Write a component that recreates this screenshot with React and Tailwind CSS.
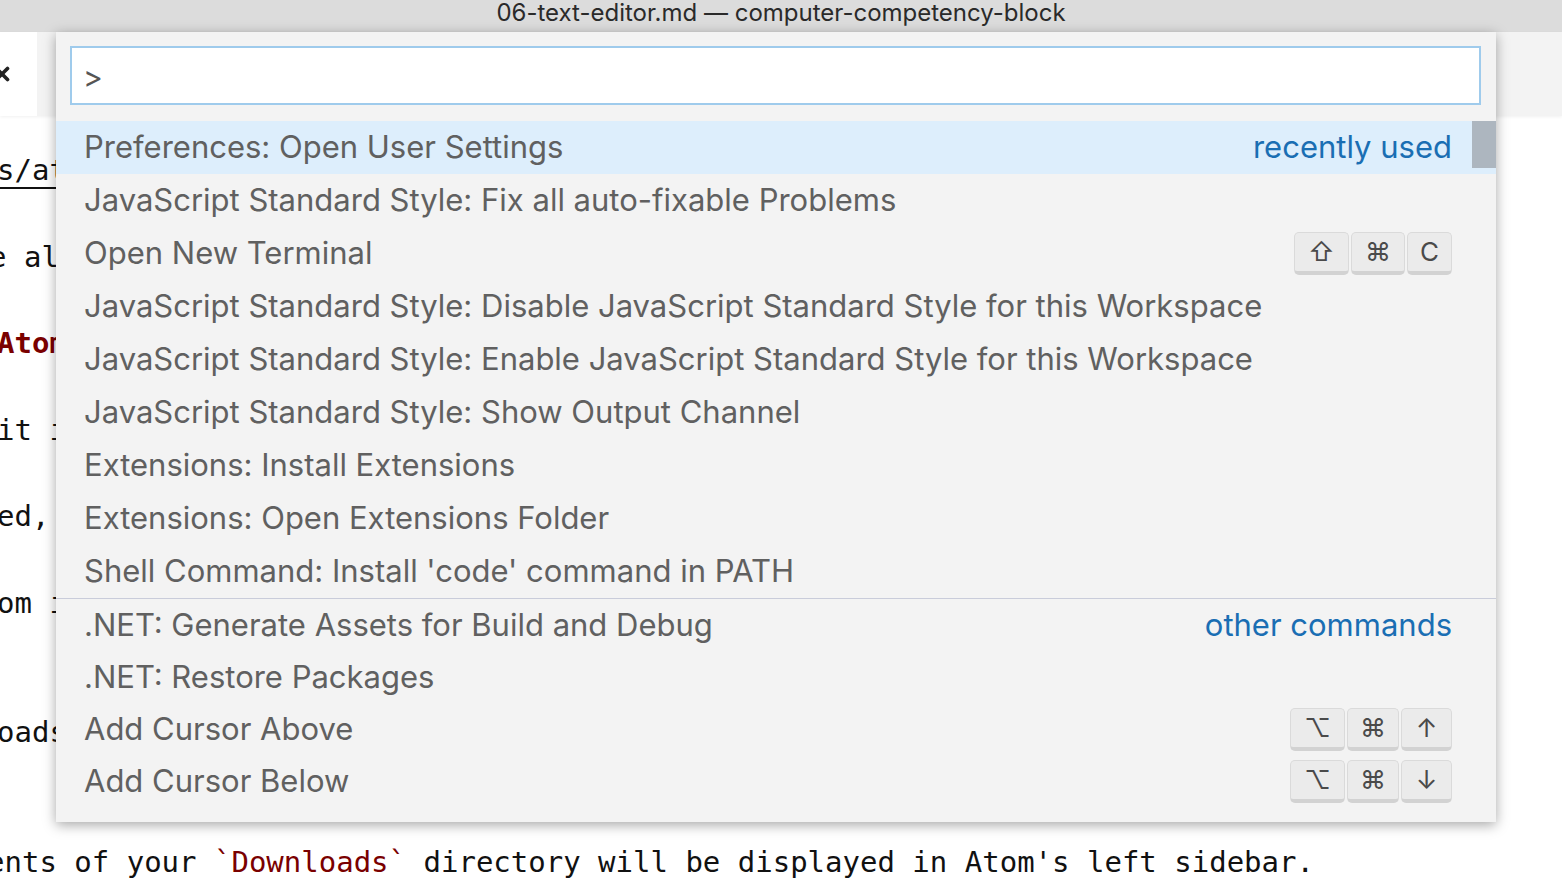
import { X } from "lucide-react";

const GROUP_ONE = [
  { label: "Preferences: Open User Settings", hint: "recently used", active: true },
  { label: "JavaScript Standard Style: Fix all auto-fixable Problems" },
  {
    label: "Open New Terminal",
    keys: [
      { k: "⇧", w: "w-[55px]" },
      { k: "⌘", w: "w-[54px]" },
      { k: "C", w: "w-[45px]" },
    ],
  },
  { label: "JavaScript Standard Style: Disable JavaScript Standard Style for this Workspace" },
  { label: "JavaScript Standard Style: Enable JavaScript Standard Style for this Workspace" },
  { label: "JavaScript Standard Style: Show Output Channel" },
  { label: "Extensions: Install Extensions" },
  { label: "Extensions: Open Extensions Folder" },
  { label: "Shell Command: Install 'code' command in PATH" },
];

const GROUP_TWO = [
  { label: ".NET: Generate Assets for Build and Debug", hint: "other commands" },
  { label: ".NET: Restore Packages" },
  {
    label: "Add Cursor Above",
    keys: [
      { k: "⌥", w: "w-[55px]" },
      { k: "⌘", w: "w-[52px]" },
      { k: "↑", w: "w-[51px]" },
    ],
  },
  {
    label: "Add Cursor Below",
    keys: [
      { k: "⌥", w: "w-[55px]" },
      { k: "⌘", w: "w-[52px]" },
      { k: "↓", w: "w-[51px]" },
    ],
  },
];

function Key({ k, w }) {
  return (
    <div
      className={`${w} h-[43px] flex items-center justify-center rounded-[5px] bg-[#ebebeb] border border-[#dadada] border-b-[4px] border-b-[#d2d2d2] text-[26px] text-[#4a4a4a] leading-none`}
    >
      {k}
    </div>
  );
}

function Row({ item, h }) {
  return (
    <div
      className={`${h} flex items-center justify-between pl-[28px] pr-[44px] ${
        item.active ? "bg-[#ddeefc]" : ""
      }`}
    >
      <span className="whitespace-nowrap">{item.label}</span>
      {item.hint && <span className="text-[#1a6eb3]">{item.hint}</span>}
      {item.keys && (
        <div className="flex gap-[2px]">
          {item.keys.map((key, i) => (
            <Key key={i} {...key} />
          ))}
        </div>
      )}
    </div>
  );
}

// fragments of the markdown file peeking out left of the palette
const EDITOR_LINES = [
  { text: "s/at", underline: true, shift: "-ml-[3px]" },
  null,
  { text: "e al", shift: "-ml-[11px]" },
  null,
  { text: "Atom", red: true, bold: true, shift: "-ml-[3px]" },
  null,
  { text: "it i", shift: "-ml-[3px]" },
  null,
  { text: "ed,", shift: "-ml-[3px]" },
  null,
  { text: "om i", shift: "-ml-[3px]" },
  null,
  null,
  { text: "oads", shift: "-ml-[3px]" },
  null,
  null,
];

export default function App() {
  return (
    <div className="relative w-[1562px] h-[882px] overflow-hidden bg-white font-['Inter',sans-serif]">
      {/* Title bar */}
      <div className="h-[32px] bg-[#dcdcdc] flex justify-center text-[24px] leading-[26px] text-[#2a2a2a]">
        06-text-editor.md — computer-competency-block
      </div>

      {/* Tab bar */}
      <div className="h-[84px] bg-[#f3f3f3] flex shadow-[0_1px_3px_rgba(0,0,0,0.06)]">
        <div className="w-[37px] bg-white flex items-center">
          <X className="w-[22px] h-[22px] -ml-[9px] text-[#222]" strokeWidth={4} />
        </div>
      </div>

      {/* Editor */}
      <div className="pt-[33px] font-['DejaVu_Sans_Mono',monospace] text-[29px] leading-[43.25px] text-[#111]">
        {EDITOR_LINES.map((line, i) => (
          <div key={i} className={`h-[43.25px] whitespace-pre ${line ? line.shift : ""}`}>
            {line && (
              <span
                className={`${line.underline ? "underline decoration-[2px] underline-offset-[7px]" : ""} ${
                  line.red ? "text-[#7a0000]" : ""
                } ${line.bold ? "font-bold" : ""}`}
              >
                {line.text}
              </span>
            )}
          </div>
        ))}
        <div className="h-[43.25px] whitespace-pre -ml-[13px]">
          ents of your <span className="text-[#7a0000]">`Downloads`</span> directory will be displayed in
          Atom's left sidebar.
        </div>
      </div>

      {/* Command palette overlay */}
      <div className="absolute left-[56px] top-[32px] w-[1440px] h-[790px] bg-[#f3f3f3] shadow-[0_3px_12px_rgba(0,0,0,0.35)] text-[31px] text-[#606060]">
        <div className="pt-[14px] px-[14px] pb-[16px]">
          <div className="w-[1411px] h-[59px] bg-white border-2 border-[#9fcbec] flex items-center pl-[11px] pt-[3px] text-[30px] text-[#555]">
            &gt;
          </div>
        </div>
        <div className="relative">
          {GROUP_ONE.map((item, i) => (
            <Row key={i} item={item} h="h-[53px]" />
          ))}
          <div className="absolute right-0 top-0 w-[24px] h-[47px] bg-[#adb6bf]" />
        </div>
        <div className="h-px bg-[#c9ccda]" />
        {GROUP_TWO.map((item, i) => (
          <Row key={i} item={item} h="h-[52px]" />
        ))}
      </div>
    </div>
  );
}
